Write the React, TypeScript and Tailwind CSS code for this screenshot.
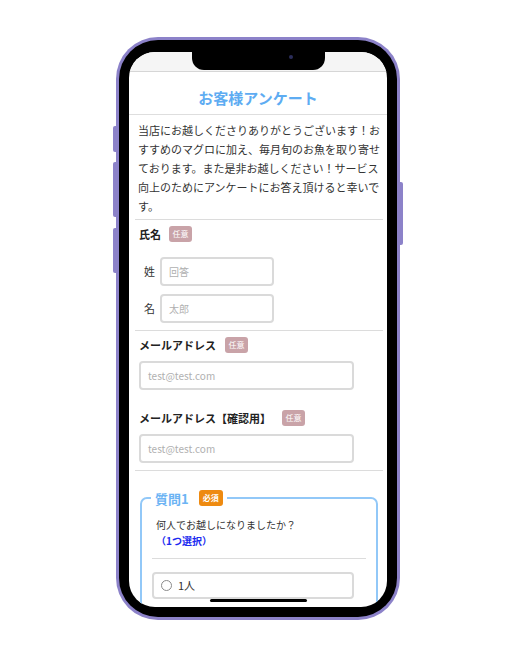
import React from 'react';

const font = { fontFamily: '"Noto Sans CJK JP", "Noto Sans", sans-serif' };

function Badge({ label, tone }: { label: string; tone: 'optional' | 'required' }) {
  return (
    <span
      className={
        tone === 'optional'
          ? 'inline-flex h-[16px] w-[23px] items-center justify-center rounded-[3px] bg-[#c9a3a8] text-[8px] leading-none text-white'
          : 'inline-flex h-[16px] w-[24px] items-center justify-center rounded-[3px] bg-[#ee8a10] text-[8px] font-bold leading-none text-white'
      }
    >
      {label}
    </span>
  );
}

function Field({ placeholder, w }: { placeholder: string; w: string }) {
  return (
    <div className={`${w} flex h-[29px] items-center rounded-[4px] border-2 border-[#dadada] bg-white pl-[7px] text-[10px] text-[#b0b0b0]`}>
      {placeholder}
    </div>
  );
}

export default function App() {
  return (
    <div className="min-h-[648px] w-[518px] bg-white pl-[116px] pt-[37px]" style={font}>
      <div className="relative h-[583px] w-[284px] rounded-[42px] bg-[#8c82c9] p-[3px]">
        {/* side buttons */}
        <span className="absolute left-[-3px] top-[89px] h-[26px] w-[3px] rounded-l-[2px] bg-[#8c82c9]" />
        <span className="absolute left-[-3px] top-[125px] h-[55px] w-[3px] rounded-l-[2px] bg-[#8c82c9]" />
        <span className="absolute left-[-3px] top-[191px] h-[45px] w-[3px] rounded-l-[2px] bg-[#8c82c9]" />
        <span className="absolute right-[-3px] top-[145px] h-[63px] w-[3px] rounded-r-[2px] bg-[#8c82c9]" />

        <div className="h-full rounded-[39px] bg-black px-[10px] pb-[10px] pt-[12px]">
          <div className="relative h-full overflow-hidden rounded-[26px] bg-white">
            {/* notch */}
            <div className="absolute left-[63px] top-0 z-10 h-[18px] w-[133px] rounded-b-[12px] bg-black">
              <span className="absolute left-[97px] top-[3px] h-[4px] w-[4px] rounded-full bg-[#2b2d5a]" />
            </div>

            <div className="h-[20px] border-b border-[#d6d6d6] bg-[#f5f5f5]" />

            <div className="border-b border-[#dedede] pb-[8px] pt-[18px] text-center text-[15px] font-bold leading-[16px] text-[#5eacf2]">
              お客様アンケート
            </div>

            <p className="whitespace-nowrap pb-[3px] pl-[9px] pt-[6px] text-[11px] leading-[19px] text-[#333]">
              当店にお越しくださりありがとうございます！お
              <br />
              すすめのマグロに加え、毎月旬のお魚を取り寄せ
              <br />
              ております。また是非お越しください！サービス
              <br />
              向上のためにアンケートにお答え頂けると幸いで
              <br />
              す。
            </p>

            <section className="ml-[6px] mr-[4px] border-t border-[#dcdcdc] pb-[7px] pl-[4px] pt-[6px]">
              <div className="flex h-[16px] items-center gap-[8px]">
                <span className="text-[11px] font-bold text-[#222]">氏名</span>
                <Badge label="任意" tone="optional" />
              </div>
              <div className="mt-[15px] flex items-center gap-[5px] pl-[5px]">
                <span className="w-[11px] text-[11px] text-[#333]">姓</span>
                <Field placeholder="回答" w="w-[114px]" />
              </div>
              <div className="mt-[8px] flex items-center gap-[5px] pl-[5px]">
                <span className="w-[11px] text-[11px] text-[#333]">名</span>
                <Field placeholder="太郎" w="w-[114px]" />
              </div>
            </section>

            <section className="ml-[6px] mr-[4px] border-t border-[#dcdcdc] pb-[7px] pl-[4px] pt-[6px]">
              <div className="flex h-[16px] items-center gap-[9px]">
                <span className="text-[11px] font-bold text-[#222]">メールアドレス</span>
                <Badge label="任意" tone="optional" />
              </div>
              <div className="mt-[8px]">
                <Field placeholder="test@test.com" w="w-[215px]" />
              </div>
              <div className="mt-[20px] flex h-[16px] items-center gap-[11px]">
                <span className="text-[11px] font-bold text-[#222]">メールアドレス【確認用】</span>
                <Badge label="任意" tone="optional" />
              </div>
              <div className="mt-[8px]">
                <Field placeholder="test@test.com" w="w-[215px]" />
              </div>
            </section>

            <section className="ml-[6px] mr-[4px] border-t border-[#dcdcdc] pt-[19px]">
              <fieldset className="ml-[5px] w-[238px] rounded-[7px] border-2 border-[#92c8f8] pb-[20px]">
                <legend className="ml-[9px] flex h-[16px] items-center px-[4px]">
                  <span className="text-[13px] font-bold leading-none text-[#6cb4f4]">質問1</span>
                  <span className="ml-[10px] flex">
                    <Badge label="必須" tone="required" />
                  </span>
                </legend>
                <div className="pl-[14px] pt-[11px] text-[10px] leading-[16px]">
                  <div className="text-[#333]">何人でお越しになりましたか？</div>
                  <div className="font-bold text-[#1c2bf0]">（1つ選択）</div>
                </div>
                <div className="mx-[10px] mt-[9px] border-t border-[#dcdcdc]" />
                <div className="ml-[10px] mt-[13px] flex h-[27px] w-[202px] items-center gap-[6px] rounded-[4px] border-2 border-[#dadada] pl-[7px]">
                  <span className="h-[11px] w-[11px] rounded-full border-[1.5px] border-[#8a8a8a]" />
                  <span className="text-[11px] text-[#333]">1人</span>
                </div>
              </fieldset>
            </section>

            {/* home indicator */}
            <span className="absolute bottom-[5px] left-[81px] h-[3px] w-[97px] rounded-full bg-black" />
          </div>
        </div>
      </div>
    </div>
  );
}
